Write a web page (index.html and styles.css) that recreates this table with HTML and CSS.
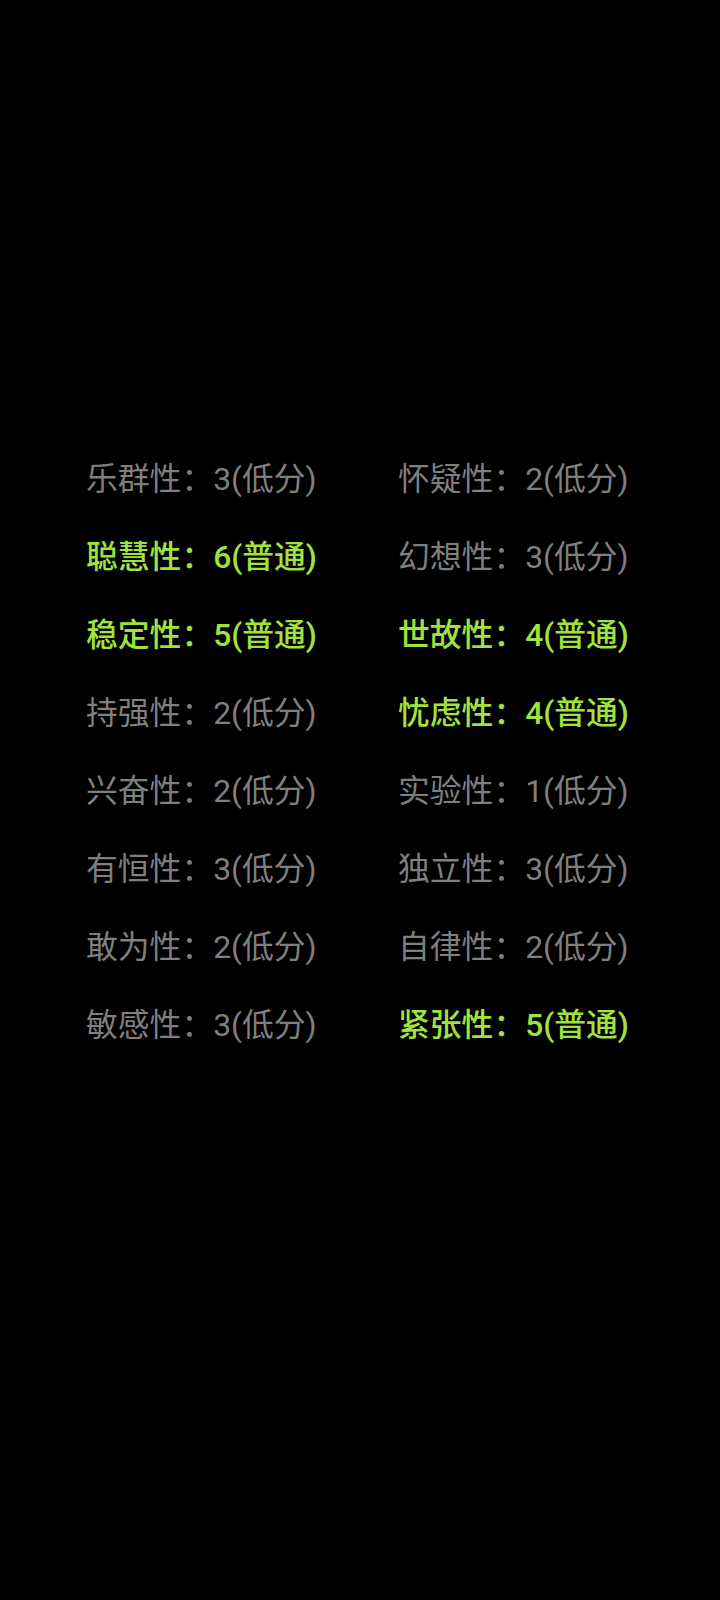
FILE: index.html
```html
<!DOCTYPE html>
<html lang="zh">
<head>
    <meta charset="UTF-8">
    <title>16PF 结果</title>
    <link rel="stylesheet" href="styles.css">
</head>
<body>
    <div class="result-grid">
        <div class="item">乐群性：3(低分)</div>
        <div class="item">怀疑性：2(低分)</div>
        <div class="item high">聪慧性：6(普通)</div>
        <div class="item">幻想性：3(低分)</div>
        <div class="item high">稳定性：5(普通)</div>
        <div class="item high">世故性：4(普通)</div>
        <div class="item">持强性：2(低分)</div>
        <div class="item high">忧虑性：4(普通)</div>
        <div class="item">兴奋性：2(低分)</div>
        <div class="item">实验性：1(低分)</div>
        <div class="item">有恒性：3(低分)</div>
        <div class="item">独立性：3(低分)</div>
        <div class="item">敢为性：2(低分)</div>
        <div class="item">自律性：2(低分)</div>
        <div class="item">敏感性：3(低分)</div>
        <div class="item high">紧张性：5(普通)</div>
    </div>
</body>
</html>
```
FILE: styles.css
```css
body {
    margin: 0;
    background-color: #000;
    font-family: Roboto, "Noto Sans CJK SC", sans-serif;
    height: 1600px;
}
.result-grid {
    display: grid;
    grid-template-columns: 312px 312px;
    padding: 440px 0 0 86px;
}
.item {
    font-size: 31.8px;
    line-height: 78px;
    color: #7f7f7f;
    white-space: nowrap;
}
.item.high {
    color: #9fe33c;
    font-weight: 500;
}
```
